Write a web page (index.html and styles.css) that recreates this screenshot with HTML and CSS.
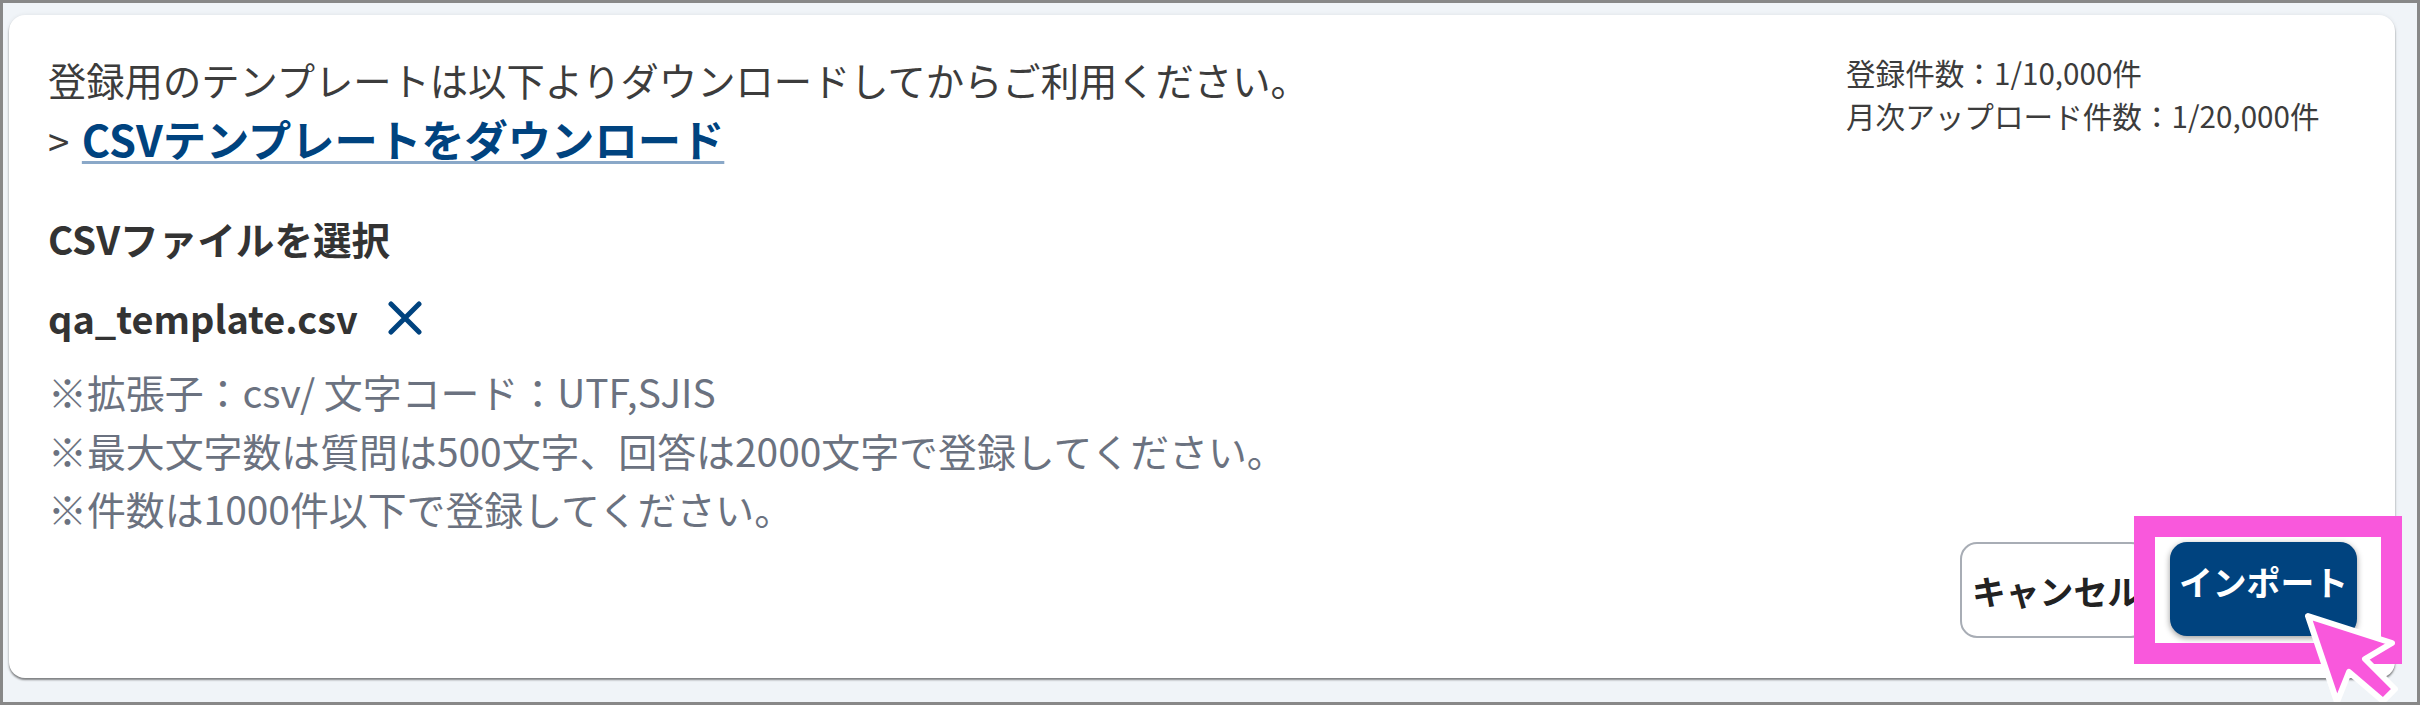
FILE: index.html
```html
<!DOCTYPE html>
<html lang="ja">
<head>
    <meta charset="UTF-8">
    <title>CSVインポート</title>
    <link rel="stylesheet" href="styles.css">
</head>
<body>
    <div class="frame">
        <div class="card">
            <div class="top-row">
                <div class="intro">
                    <p>登録用のテンプレートは以下よりダウンロードしてからご利用ください。</p>
                    <p>&gt; <a class="download-link" href="#">CSVテンプレートをダウンロード</a></p>
                </div>
                <div class="counts">
                    <div>登録件数：1/10,000件</div>
                    <div>月次アップロード件数：1/20,000件</div>
                </div>
            </div>
            <h3 class="field-label">CSVファイルを選択</h3>
            <div class="file-row">
                <span class="file-name">qa_template.csv</span>
                <svg class="remove-icon" viewBox="0 0 34 34" width="34" height="34"><path d="M3 3 L31 31 M31 3 L3 31"/></svg>
            </div>
            <ul class="notes">
                <li>※拡張子：csv/ 文字コード：UTF,SJIS</li>
                <li>※最大文字数は質問は500文字、回答は2000文字で登録してください。</li>
                <li>※件数は1000件以下で登録してください。</li>
            </ul>
            <div class="actions">
                <button class="btn btn-cancel">キャンセル</button>
                <button class="btn btn-import">インポート</button>
            </div>
            <div class="highlight"></div>
        </div>
        <svg class="cursor" viewBox="0 0 130 105" width="130" height="105">
            <path d="M18 16 L102 43 L75 59 L105 89 L93 101 L59 72 L47 102 Z"/>
        </svg>
    </div>
</body>
</html>
```
FILE: styles.css
```css
* {
    box-sizing: border-box;
}
body {
    margin: 0;
    font-family: "Noto Sans CJK JP", sans-serif;
    color: #333;
}
.frame {
    position: relative;
    width: 2420px;
    height: 705px;
    padding: 12px 22px 24px 6px;
    background-color: #f0f4f8;
    border: 3px solid #888;
    overflow: hidden;
}
.card {
    position: relative;
    height: 100%;
    padding: 36px 40px 0 39px;
    background-color: #fff;
    border-radius: 16px;
    box-shadow: 0 2px 2px rgba(0,0,0,0.45), 0 0 4px rgba(0,0,0,0.08);
}
p {
    margin: 0;
}
.top-row {
    display: flex;
    justify-content: space-between;
}
.intro {
    font-size: 38.3px;
    line-height: 58px;
    color: #3c3c3c;
}
.download-link {
    margin-left: 4px;
    color: #00437f;
    font-size: 43.3px;
    font-weight: 700;
    text-decoration: underline;
    text-decoration-color: #8aa8c8;
    text-decoration-thickness: 3px;
    text-underline-offset: 4px;
}
.counts {
    width: 509px;
    font-size: 29.6px;
    line-height: 43px;
    color: #3c3c3c;
}
.field-label {
    margin: 39px 0 0;
    font-size: 38.6px;
    line-height: 58px;
    font-weight: 700;
}
.file-row {
    display: flex;
    align-items: center;
    gap: 30px;
    margin-top: 22px;
}
.file-name {
    font-size: 37.9px;
    line-height: 58px;
    font-weight: 700;
}
.remove-icon {
    fill: none;
    stroke: #00437f;
    stroke-width: 5;
    stroke-linecap: round;
}
.notes {
    margin: 15px 0 0;
    padding: 0;
    list-style: none;
    font-size: 38.9px;
    line-height: 58.5px;
    color: #6b7280;
}
.actions {
    display: flex;
    justify-content: flex-end;
    align-items: flex-start;
    gap: 22px;
    position: absolute;
    right: 38px;
    top: 527px;
}
.btn {
    font-family: inherit;
    font-size: 33.8px;
    font-weight: 700;
    border-radius: 17px;
}
.btn-cancel {
    width: 188px;
    height: 96px;
    padding: 0 0 0 10px;
    text-align: left;
    white-space: nowrap;
    color: #222;
    background-color: #fff;
    border: 2px solid #a8adb5;
}
.btn-import {
    width: 187px;
    height: 94px;
    padding: 0 0 16px;
    white-space: nowrap;
    color: #fff;
    background-color: #00437f;
    border: 0;
    box-shadow: 0 2px 6px rgba(0,0,0,0.4);
}
.highlight {
    position: absolute;
    left: 2125px;
    top: 501px;
    width: 268px;
    height: 148px;
    border: 21px solid #f958dc;
}
.cursor {
    position: absolute;
    left: 2287px;
    top: 597px;
    fill: #f958dc;
    stroke: #fff;
    stroke-width: 6;
    stroke-linejoin: round;
}
```
